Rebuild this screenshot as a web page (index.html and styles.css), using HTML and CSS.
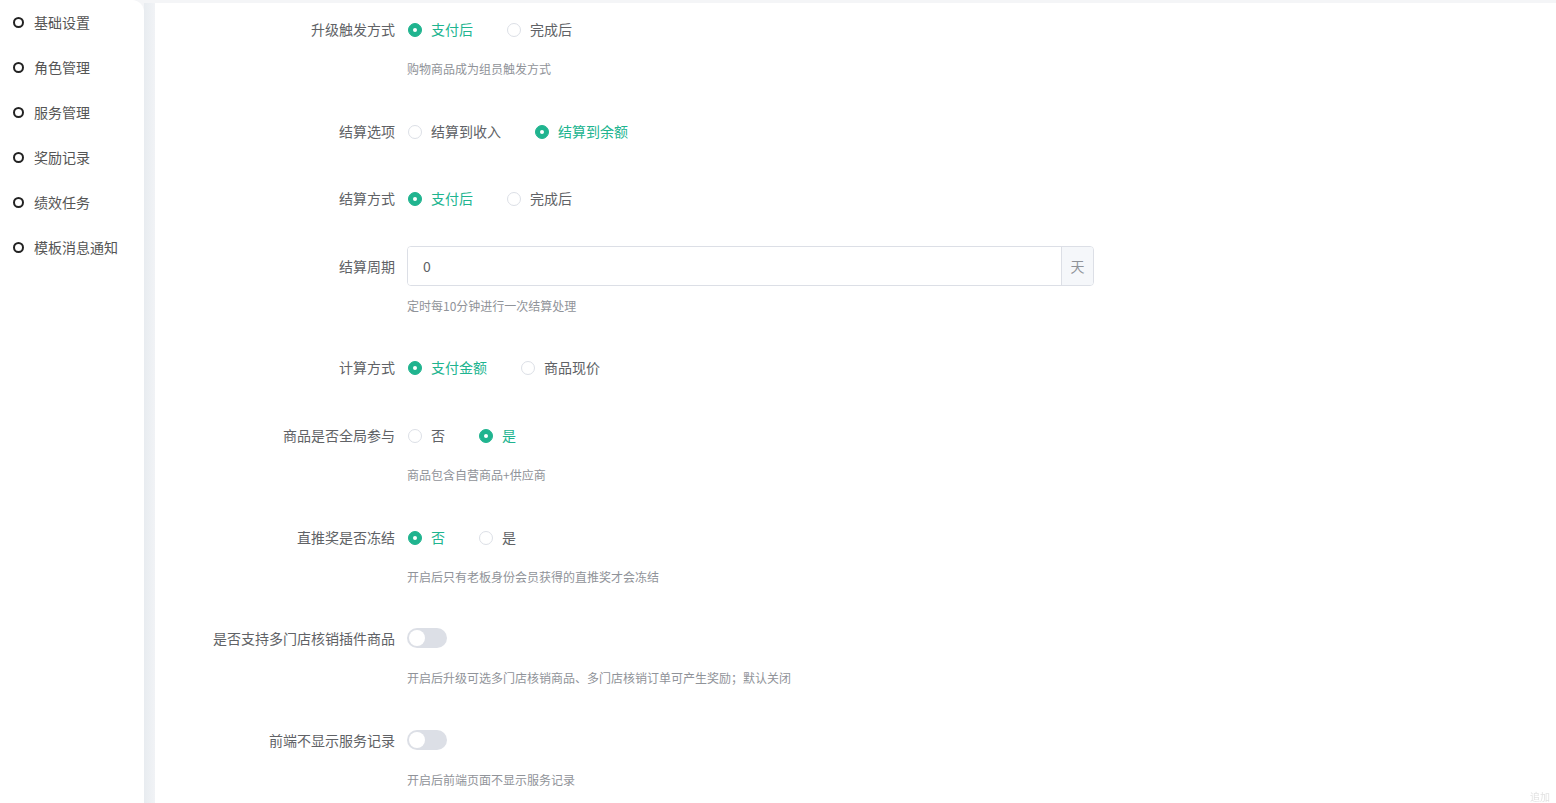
FILE: index.html
```html
<html>
  <head>
    <meta name="viewport" content="width=device-width, initial-scale=1"/>
    <link rel="stylesheet" href="styles.css">
  </head>
  <body>
    <div class="page">
      <div class="side-menu">
        <div class="menu-item"><span class="menu-dot"></span>基础设置</div>
        <div class="menu-item"><span class="menu-dot"></span>角色管理</div>
        <div class="menu-item"><span class="menu-dot"></span>服务管理</div>
        <div class="menu-item"><span class="menu-dot"></span>奖励记录</div>
        <div class="menu-item"><span class="menu-dot"></span>绩效任务</div>
        <div class="menu-item"><span class="menu-dot"></span>模板消息通知</div>
      </div>
      <div class="side-gap"></div>

      <div class="main">
        <div class="form-item">
          <div class="form-label">升级触发方式</div>
          <div class="form-control">
            <label class="radio checked"><span class="radio-inner"></span>支付后</label>
            <label class="radio"><span class="radio-inner"></span>完成后</label>
          </div>
        </div>
        <div class="form-help">购物商品成为组员触发方式</div>

        <div class="form-item">
          <div class="form-label">结算选项</div>
          <div class="form-control">
            <label class="radio"><span class="radio-inner"></span>结算到收入</label>
            <label class="radio checked"><span class="radio-inner"></span>结算到余额</label>
          </div>
        </div>

        <div class="form-item">
          <div class="form-label">结算方式</div>
          <div class="form-control">
            <label class="radio checked"><span class="radio-inner"></span>支付后</label>
            <label class="radio"><span class="radio-inner"></span>完成后</label>
          </div>
        </div>

        <div class="form-item">
          <div class="form-label">结算周期</div>
          <div class="form-control">
            <div class="input-group">
              <input type="text" class="input" value="0">
              <div class="input-append">天</div>
            </div>
          </div>
        </div>
        <div class="form-help">定时每10分钟进行一次结算处理</div>

        <div class="form-item">
          <div class="form-label">计算方式</div>
          <div class="form-control">
            <label class="radio checked"><span class="radio-inner"></span>支付金额</label>
            <label class="radio"><span class="radio-inner"></span>商品现价</label>
          </div>
        </div>

        <div class="form-item">
          <div class="form-label">商品是否全局参与</div>
          <div class="form-control">
            <label class="radio"><span class="radio-inner"></span>否</label>
            <label class="radio checked"><span class="radio-inner"></span>是</label>
          </div>
        </div>
        <div class="form-help">商品包含自营商品+供应商</div>

        <div class="form-item">
          <div class="form-label">直推奖是否冻结</div>
          <div class="form-control">
            <label class="radio checked"><span class="radio-inner"></span>否</label>
            <label class="radio"><span class="radio-inner"></span>是</label>
          </div>
        </div>
        <div class="form-help">开启后只有老板身份会员获得的直推奖才会冻结</div>

        <div class="form-item">
          <div class="form-label">是否支持多门店核销插件商品</div>
          <div class="form-control">
            <span class="switch"><span class="switch-knob"></span></span>
          </div>
        </div>
        <div class="form-help">开启后升级可选多门店核销商品、多门店核销订单可产生奖励；默认关闭</div>

        <div class="form-item">
          <div class="form-label">前端不显示服务记录</div>
          <div class="form-control">
            <span class="switch"><span class="switch-knob"></span></span>
          </div>
        </div>
        <div class="form-help">开启后前端页面不显示服务记录</div>
      </div>
    </div>
    <div class="corner-hint">追加</div>
  </body>
</html>
```

FILE: styles.css
```css
body {
  margin: 0;
  font-family: "Noto Sans CJK SC", "Liberation Sans", sans-serif;
  background-color: #f4f5f7;
  overflow: hidden;
}

.page {
  display: flex;
  height: 803px;
}

/* left menu */
.side-menu {
  width: 144px;
  background-color: #fff;
  border-top-right-radius: 12px;
  flex-shrink: 0;
}

.menu-item {
  display: flex;
  align-items: center;
  height: 45px;
  margin-top: -1px;
  margin-bottom: 1px;
  font-size: 14px;
  color: #555;
  padding-left: 13px;
}

.menu-dot {
  width: 7px;
  height: 7px;
  border: 2px solid #222;
  border-radius: 50%;
  margin-right: 10px;
  margin-top: 2px;
}

.side-gap {
  width: 11px;
  flex-shrink: 0;
  background: linear-gradient(to right, #e8ecf0, #f1f3f6);
  margin-top: 3px;
}

/* main form */
.main {
  flex: 1;
  background-color: #fff;
  margin-top: 3px;
  padding-top: 6px;
}

.form-item {
  display: flex;
  align-items: center;
  height: 40px;
  margin-bottom: 27.6px;
}

.form-label {
  width: 240px;
  padding-right: 12px;
  text-align: right;
  font-size: 14px;
  color: #606266;
  flex-shrink: 0;
}

.form-control {
  display: flex;
  align-items: center;
}

.form-help {
  margin-top: -27.6px;
  margin-bottom: 27.6px;
  padding-top: 10px;
  padding-left: 252px;
  height: 24px;
  line-height: 20px;
  font-size: 12px;
  color: #909399;
}

.radio {
  display: flex;
  align-items: center;
  font-size: 14px;
  color: #606266;
  margin-right: 33px;
}

.radio-inner {
  width: 12px;
  height: 12px;
  border: 1px solid #dcdfe6;
  border-radius: 50%;
  margin-right: 9px;
  margin-left: 1px;
  margin-top: 2px;
  position: relative;
  background-color: #fff;
}

.radio.checked {
  color: #20b48f;
}

.radio.checked .radio-inner {
  background-color: #20b48f;
  border-color: #20b48f;
}

.radio.checked .radio-inner::after {
  content: "";
  position: absolute;
  width: 4px;
  height: 4px;
  border-radius: 50%;
  background-color: #fff;
  left: 4px;
  top: 4px;
}

.input-group {
  display: flex;
  width: 687px;
  height: 40px;
  border: 1px solid #dcdfe6;
  border-radius: 4px;
  box-sizing: border-box;
  overflow: hidden;
}

.input {
  flex: 1;
  border: none;
  padding: 0 15px;
  font-size: 14px;
  color: #606266;
  font-family: "Noto Sans CJK SC", "Liberation Sans", sans-serif;
  outline: none;
}

.input-append {
  width: 31px;
  border-left: 1px solid #dcdfe6;
  background-color: #f5f7fa;
  color: #909399;
  font-size: 14px;
  display: flex;
  align-items: center;
  justify-content: center;
}

.switch {
  display: inline-block;
  width: 40px;
  height: 20px;
  border-radius: 10px;
  background-color: #dcdfe6;
  position: relative;
}

.switch-knob {
  position: absolute;
  width: 16px;
  height: 16px;
  border-radius: 50%;
  background-color: #fff;
  top: 2px;
  left: 2px;
}

.corner-hint {
  position: fixed;
  right: 6px;
  bottom: 0;
  font-size: 10px;
  line-height: 12px;
  color: #e2e2e2;
}
```
